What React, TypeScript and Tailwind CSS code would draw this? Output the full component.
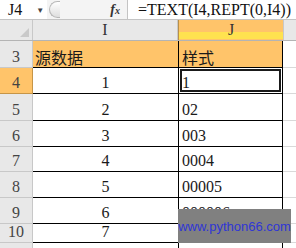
const serif = { fontFamily: '"Liberation Serif", "Noto Sans CJK SC", serif' };

type Row = {
  n: number;
  h: string;
  i: string;
  j: string;
  head?: boolean;
  sel?: boolean;
};

const rows: Row[] = [
  { n: 3, h: 'h-[27px]', i: '源数据', j: '样式', head: true },
  { n: 4, h: 'h-[26px]', i: '1', j: '1', sel: true },
  { n: 5, h: 'h-[27px]', i: '2', j: '02' },
  { n: 6, h: 'h-[26px]', i: '3', j: '003' },
  { n: 7, h: 'h-[25px]', i: '4', j: '0004' },
  { n: 8, h: 'h-[26px]', i: '5', j: '00005' },
  { n: 9, h: 'h-[26px]', i: '6', j: '000006' },
  { n: 10, h: 'h-[19px]', i: '7', j: '0000007' },
];

function CellText({ text, cjk }: { text: string; cjk: boolean }) {
  if (cjk) {
    return (
      <span
        className="text-[16px] leading-none text-[#1a1a1a]"
        style={{ fontFamily: '"Noto Sans CJK SC", sans-serif' }}
      >
        {text}
      </span>
    );
  }
  return (
    <span className="text-[16px] leading-none text-[#1a1a1a]" style={serif}>
      {text}
    </span>
  );
}

export default function App() {
  return (
    <main className="h-[248px] w-[296px] overflow-hidden bg-white">
      {/* formula bar */}
      <div className="flex h-[20px] items-center border-b border-[#c4c4c4] bg-[#f4f4f4]">
        <div className="flex h-full w-[47px] items-center bg-white pl-[8px]">
          <span className="text-[16px] leading-none text-[#111]" style={serif}>
            J4
          </span>
          <span className="ml-[14px] text-[8px] leading-none text-[#444]">▼</span>
        </div>
        <div className="ml-[2px] h-[17px] w-[11px] rounded-l-full border border-r-0 border-[#b8b8b8] bg-gradient-to-b from-white to-[#dedede]" />
        <div className="flex-1" />
        <span
          className="mr-[7px] text-[14px] font-bold italic leading-none text-[#333]"
          style={{ fontFamily: '"Liberation Serif", serif' }}
        >
          f<span className="text-[10px]">x</span>
        </span>
        <div className="flex h-full w-[169px] items-center overflow-hidden border-l border-[#c4c4c4] bg-white pl-[10px]">
          <span className="whitespace-nowrap text-[16px] leading-none text-[#111]" style={serif}>
            =TEXT(I4,REPT(0,I4))
          </span>
        </div>
      </div>

      <div className="relative">
        {/* column headers */}
        <div className="grid h-[21px] grid-cols-[33px_145px_105px_13px] border-b border-[#b4b4b4]">
          <div className="relative border-r border-[#c8c8c8] bg-[#e8e8e8]">
            <div className="absolute bottom-[3px] right-[3px] h-0 w-0 border-b-[9px] border-l-[9px] border-b-[#c9c9c9] border-l-transparent" />
          </div>
          <div className="flex items-end justify-center border-r border-[#c8c8c8] bg-[#e8e8e8] pb-[2px]">
            <span className="text-[16px] leading-none text-[#333]" style={serif}>
              I
            </span>
          </div>
          <div className="relative flex items-end justify-center border-l border-[#b8904a] bg-[#ffc46a] pb-[2px]">
            <div className="absolute bottom-[1px] left-0 right-0 h-[7px] bg-[#ffe24f]" />
            <span className="relative text-[16px] leading-none text-[#333]" style={serif}>
              J
            </span>
          </div>
          <div className="border-l border-[#c8c8c8] bg-[#e8e8e8]" />
        </div>

        {rows.map((r) => (
          <div key={r.n} className={`grid grid-cols-[33px_145px_105px_13px] ${r.h}`}>
            <div
              className={`flex items-end justify-center border-b border-r pb-[2px] ${
                r.sel ? 'border-[#c69547] bg-[#ffc46a]' : 'border-[#c8c8c8] bg-[#e8e8e8]'
              }`}
            >
              <span className="text-[16px] leading-none text-[#444]" style={serif}>
                {r.n}
              </span>
            </div>
            <div
              className={`flex items-end border-b border-black pb-[2px] ${
                r.head ? 'justify-start bg-[#ffc46a] pl-[2px]' : 'justify-center bg-white'
              }`}
            >
              <CellText text={r.i} cjk={!!r.head} />
            </div>
            <div
              className={`relative flex items-end border-b border-l border-r border-black pl-[3px] pb-[2px] ${
                r.head ? 'bg-[#ffc46a]' : 'bg-white'
              }`}
            >
              {r.sel && <div className="absolute inset-[1px] border-2 border-[#1a1a1a]" />}
              <CellText text={r.j} cjk={!!r.head} />
            </div>
            <div className="border-b border-[#d9d9d9] bg-white" />
          </div>
        ))}

        <div className="grid h-[10px] grid-cols-[33px_145px_105px_13px]">
          <div className="border-r border-[#c8c8c8] bg-[#e8e8e8]" />
          <div className="bg-white" />
          <div className="border-l border-r border-black bg-white" />
          <div className="bg-white" />
        </div>

        {/* watermark */}
        <div className="absolute left-[178px] top-[189px] flex h-[34px] w-[113px] items-center justify-center bg-[#808080]">
          <span
            className="text-[13px] leading-none text-[#2f36d6]"
            style={{ fontFamily: '"Liberation Sans", Arial, sans-serif' }}
          >
            www.python66.com
          </span>
        </div>
      </div>
    </main>
  );
}
